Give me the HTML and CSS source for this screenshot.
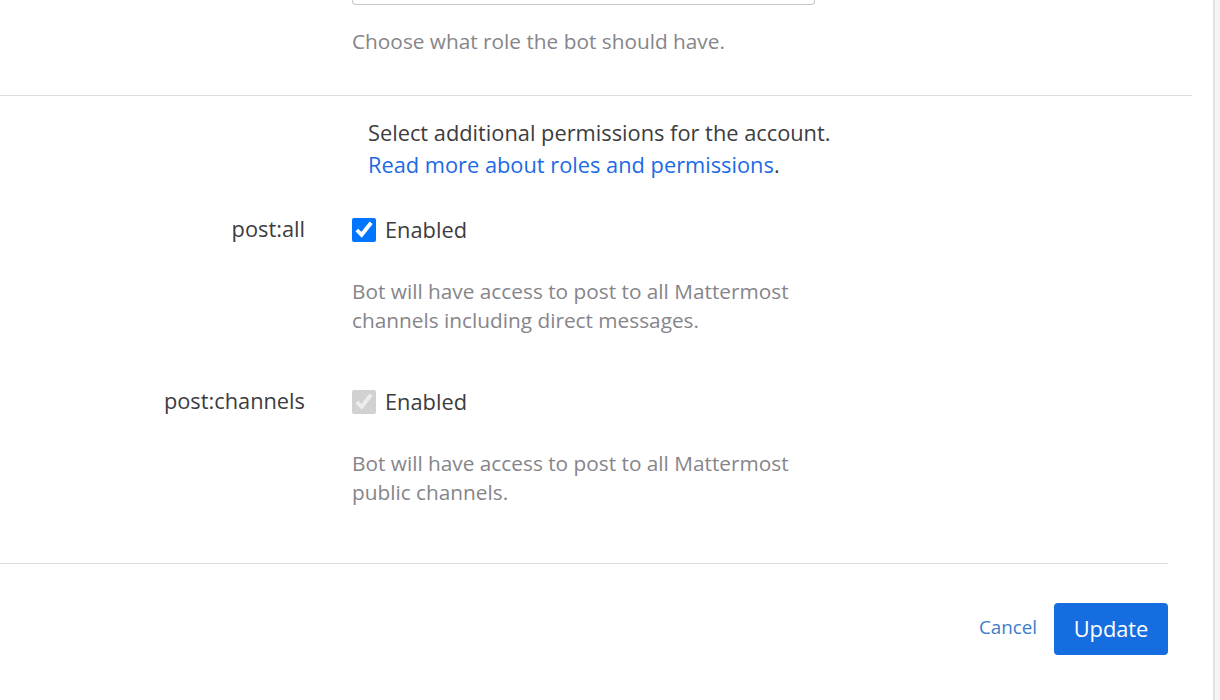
FILE: index.html
```html
<!DOCTYPE html>
<html lang="en">
<head>
<meta charset="utf-8">
<title>Edit Bot Account</title>
<link rel="stylesheet" href="styles.css">
</head>
<body>
<div class="page">
  <main class="main">
    <section class="role-row">
      <div class="ctrl">
        <div class="input-tail"></div>
        <p class="help first-help">Choose what role the bot should have.</p>
      </div>
    </section>
    <hr class="divider divider-top">
    <section class="intro">
      <p class="intro-text">Select additional permissions for the account.</p>
      <p class="intro-text"><a class="link" href="#">Read more about roles and permissions</a>.</p>
    </section>
    <section class="perm perm-first">
      <div class="perm-label">post:all</div>
      <div class="perm-ctrl">
        <label class="check-line"><input class="check" type="checkbox" checked><span>Enabled</span></label>
        <p class="help desc">Bot will have access to post to all Mattermost<br>channels including direct messages.</p>
      </div>
    </section>
    <section class="perm perm-second">
      <div class="perm-label">post:channels</div>
      <div class="perm-ctrl">
        <label class="check-line"><input class="check" type="checkbox" checked disabled><span>Enabled</span></label>
        <p class="help desc">Bot will have access to post to all Mattermost<br>public channels.</p>
      </div>
    </section>
    <hr class="divider divider-bottom">
    <footer class="footer">
      <button class="btn-cancel" type="button">Cancel</button>
      <button class="btn-update" type="button">Update</button>
    </footer>
  </main>
  <aside class="gutter"></aside>
</div>
</body>
</html>
```
FILE: styles.css
```css
html, body {
  margin: 0;
  padding: 0;
  background: #ffffff;
}
body {
  font-family: "Open Sans", "DejaVu Sans", sans-serif;
  color: #3d3c40;
  font-size: 21.8px;
  overflow: hidden;
}
p { margin: 0; }

.page {
  display: flex;
  height: 700px;
}
.main {
  width: 1215px;
  flex: none;
  border-right: 2px solid #e2e2e2;
  box-sizing: border-box;
}
.gutter {
  flex: 1;
  background: #f4f4f4;
}

.role-row {
  padding-left: 352px;
}
.ctrl { width: 463px; }
.input-tail {
  height: 5px;
  border: 1px solid #c8c8c8;
  border-top: none;
  border-radius: 0 0 4px 4px;
  box-sizing: border-box;
}
.help {
  color: #86858a;
  font-size: 20.8px;
  line-height: 29px;
}
.first-help {
  margin-top: 22px;
}

.divider {
  border: none;
  border-top: 1px solid #dddddd;
  margin: 0;
}
.divider-top {
  margin-top: 39px;
  width: 1192px;
}
.divider-bottom {
  margin-top: 56px;
  width: 1168px;
}

.intro {
  padding-left: 368px;
  padding-top: 21px;
}
.intro-text {
  line-height: 32px;
}
.link {
  color: #1c6ae4;
  text-decoration: none;
}

.perm {
  display: grid;
  grid-template-columns: 305px 1fr;
  column-gap: 47px;
}
.perm-first { margin-top: 33px; }
.perm-second { margin-top: 51px; }
.perm-label {
  text-align: right;
  line-height: 30px;
}
.check-line {
  display: flex;
  align-items: center;
  gap: 9px;
  height: 32px;
  line-height: 32px;
}
.check {
  width: 24px;
  height: 24px;
  margin: 0;
  flex: none;
}
.desc {
  margin-top: 31px;
}

.footer {
  display: flex;
  justify-content: flex-end;
  align-items: center;
  gap: 17px;
  width: 1168px;
  margin-top: 39px;
}
.btn-cancel {
  font-family: inherit;
  background: none;
  border: none;
  padding: 0 0 4px 0;
  color: #3b7ccb;
  font-size: 18.8px;
  cursor: pointer;
}
.btn-update {
  font-family: inherit;
  background: #166de0;
  color: #ffffff;
  border: none;
  border-radius: 4px;
  width: 114px;
  height: 52px;
  font-size: 21.8px;
  padding: 0 0 2px 0;
  cursor: pointer;
}
```
